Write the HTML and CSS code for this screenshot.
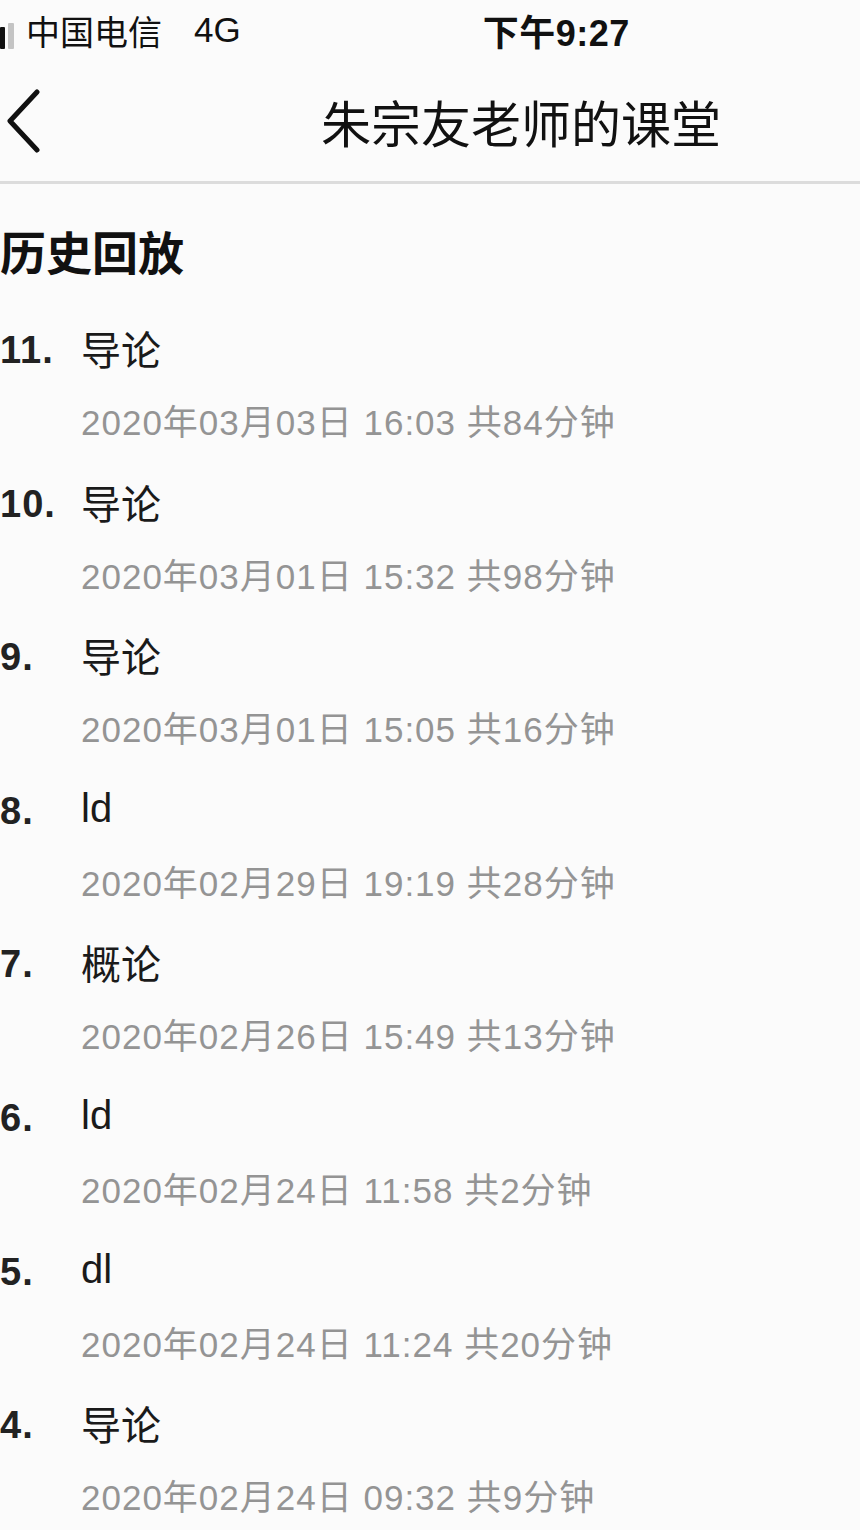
FILE: index.html
```html
<!DOCTYPE html>
<html lang="zh-CN">
<head>
<meta charset="utf-8">
<title>朱宗友老师的课堂</title>
<link rel="stylesheet" href="styles.css">
</head>
<body>
<div class="status">
  <span class="signal"><i></i><i class="dim"></i></span>
  <span class="carrier">中国电信</span>
  <span class="net">4G</span>
  <span class="time">下午9:27</span>
</div>
<div class="nav">
  <svg class="back" width="40" height="64" viewBox="0 0 40 64"><path d="M33 3 L6 32 L33 61" fill="none" stroke="#111" stroke-width="5" stroke-linecap="round" stroke-linejoin="round"/></svg>
  <h1 class="title">朱宗友老师的课堂</h1>
</div>
<h2 class="section">历史回放</h2>
<ul class="list">
  <li class="item"><div class="row"><span class="num">11.</span><span class="name">导论</span></div><div class="meta">2020年03月03日 16:03 共84分钟</div></li>
  <li class="item"><div class="row"><span class="num">10.</span><span class="name">导论</span></div><div class="meta">2020年03月01日 15:32 共98分钟</div></li>
  <li class="item"><div class="row"><span class="num">9.</span><span class="name">导论</span></div><div class="meta">2020年03月01日 15:05 共16分钟</div></li>
  <li class="item"><div class="row"><span class="num">8.</span><span class="name">ld</span></div><div class="meta">2020年02月29日 19:19 共28分钟</div></li>
  <li class="item"><div class="row"><span class="num">7.</span><span class="name">概论</span></div><div class="meta">2020年02月26日 15:49 共13分钟</div></li>
  <li class="item"><div class="row"><span class="num">6.</span><span class="name">ld</span></div><div class="meta">2020年02月24日 11:58 共2分钟</div></li>
  <li class="item"><div class="row"><span class="num">5.</span><span class="name">dl</span></div><div class="meta">2020年02月24日 11:24 共20分钟</div></li>
  <li class="item"><div class="row"><span class="num">4.</span><span class="name">导论</span></div><div class="meta">2020年02月24日 09:32 共9分钟</div></li>
</ul>
</body>
</html>
```
FILE: styles.css
```css
html, body {
  margin: 0;
  padding: 0;
  background: #fbfbfb;
  color: #111;
  font-family: "Liberation Sans", "Noto Sans CJK SC", sans-serif;
}

.status {
  display: flex;
  align-items: center;
  height: 60px;
  font-size: 35px;
  color: #111;
}
.signal {
  display: flex;
  align-items: flex-end;
  gap: 3px;
  width: 14px;
  height: 34px;
  padding-top: 4px;
}
.signal i {
  display: block;
  width: 5px;
  height: 22px;
  background: #111;
  border-radius: 1px;
}
.signal i.dim {
  width: 6px;
  height: 26px;
  background: #c4c4c4;
}
.carrier {
  margin-left: 12px;
  font-family: "Noto Sans CJK SC", sans-serif;
  font-size: 34px;
}
.net {
  margin-left: 32px;
}
.time {
  margin-left: 242px;
  font-weight: 700;
  font-size: 36px;
  letter-spacing: 0.5px;
}

.nav {
  display: flex;
  align-items: center;
  height: 121px;
  border-bottom: 3px solid #dcdcdc;
}
.back {
  margin-left: 4px;
  display: block;
}
.title {
  margin: 0 0 0 277px;
  font-family: "Noto Sans CJK SC", sans-serif;
  font-weight: 400;
  font-size: 50px;
}

.section {
  margin: 0;
  padding: 33px 0 0 0;
  font-family: "Noto Sans CJK SC", sans-serif;
  font-weight: 700;
  font-size: 46px;
  line-height: 66px;
}

.list {
  list-style: none;
  margin: 0;
  padding: 0;
  margin-top: 35px;
}
.item {
  height: 153.6px;
}
.row {
  display: flex;
  align-items: center;
  height: 60px;
}
.num {
  width: 81px;
  padding-top: 5px;
  font-weight: 700;
  font-size: 38px;
  letter-spacing: 1px;
  color: #222;
}
.name {
  font-family: "Liberation Sans", "Noto Sans CJK SC", sans-serif;
  font-size: 40px;
  color: #1a1a1a;
}
.meta {
  margin-top: 25px;
  margin-left: 81px;
  font-size: 35px;
  letter-spacing: 1px;
  line-height: 40px;
  color: #949494;
}
```
